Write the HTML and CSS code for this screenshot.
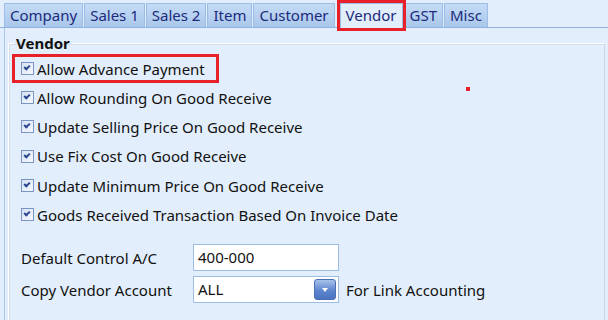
FILE: index.html
```html
<!DOCTYPE html>
<html lang="en">

<head>
    <meta charset="UTF-8">
    <meta name="viewport" content="width=device-width, initial-scale=1.0">
    <title>Vendor Settings</title>
    <link rel="stylesheet" href="styles.css">
</head>

<body>
    <div class="tabs">
        <div class="tab">Company</div>
        <div class="tab">Sales 1</div>
        <div class="tab">Sales 2</div>
        <div class="tab">Item</div>
        <div class="tab">Customer</div>
        <div class="tab active">Vendor</div>
        <div class="tab">GST</div>
        <div class="tab">Misc</div>
    </div>

    <div class="panel">
        <fieldset class="group">
            <legend>Vendor</legend>

            <div class="options">
                <label class="option marked"><span class="check"></span>Allow Advance Payment</label>
                <label class="option"><span class="check"></span>Allow Rounding On Good Receive</label>
                <label class="option"><span class="check"></span>Update Selling Price On Good Receive</label>
                <label class="option"><span class="check"></span>Use Fix Cost On Good Receive</label>
                <label class="option"><span class="check"></span>Update Minimum Price On Good Receive</label>
                <label class="option"><span class="check"></span>Goods Received Transaction Based On Invoice Date</label>
            </div>

            <div class="fields">
                <div class="field">
                    <span class="field-label">Default Control A/C</span>
                    <div class="input">400-000</div>
                </div>
                <div class="field">
                    <span class="field-label">Copy Vendor Account</span>
                    <div class="input select">ALL<span class="drop"></span></div>
                    <span class="note">For Link Accounting</span>
                </div>
            </div>

            <!-- stray red pixel from the original capture -->
            <span class="dot"></span>
        </fieldset>
    </div>
</body>

</html>
```

FILE: styles.css
```css
/* Global styles */

body {
    margin: 0;
    font-family: "Noto Sans", sans-serif;
    font-size: 15px;
    color: #111;
    background-color: #e2eefb;
    /* Light blue window */
    height: 320px;
    overflow: hidden;
}
/* Tab strip */

.tabs {
    display: flex;
    gap: 1px;
    padding: 3px 0 0 4px;
    height: 24px;
    border-bottom: 1px solid #8fb3e0;
}

.tab {
    height: 23px;
    line-height: 22px;
    padding: 0 5px;
    color: #1c2a7c;
    border: 1px solid #9cbde6;
    border-bottom: none;
    background: linear-gradient(#c4dbf5, #a9c7eb);
}

.tab.active {
    height: 24px;
    margin: 0 0 0 4px;
    background: #e2eefb;
    outline: 3px solid #e8202a;
    outline-offset: 0;
    position: relative;
    /* highlight box over the strip */
}
/* Tab page */

.panel {
    margin-left: 4px;
    height: 292px;
    border-left: 1px solid #a9c5e8;
    padding: 6px 3px 0 3px;
}

.group {
    margin: 0;
    height: 290px;
    padding: 0 0 0 12px;
    border: 1px solid #fff;
    border-right-color: #cfd9e6;
    border-bottom-color: #cfd9e6;
    box-shadow: inset 1px 1px 0 #d4dde8;
    position: relative;
}

.group legend {
    font-weight: bold;
    padding: 0 2px;
    margin-left: -7px;
    line-height: 18px;
}
/* Check options */

.options {
    display: flex;
    flex-direction: column;
    padding-top: 2px;
}

.option {
    display: flex;
    align-items: center;
    gap: 3px;
    height: 29.3px;
    width: max-content;
}

.option.marked {
    outline: 3px solid #e8202a;
    outline-offset: 0;
    padding-right: 11px;
    margin-left: -6px;
    padding-left: 6px;
    height: 23px;
    margin-top: 3px;
    margin-bottom: 3px;
}

.check {
    width: 11px;
    height: 11px;
    border: 1px solid #7b96c2;
    background: linear-gradient(135deg, #d5e2f3, #f6f9fd);
    position: relative;
}

.check::after {
    content: "";
    position: absolute;
    left: 2px;
    top: 2px;
    width: 4px;
    height: 2px;
    border-left: 2px solid #2a4590;
    border-bottom: 2px solid #2a4590;
    transform: rotate(-45deg);
}
/* Fields */

.fields {
    display: flex;
    flex-direction: column;
    gap: 5px;
    margin-top: 15px;
}

.field {
    display: flex;
    align-items: center;
}

.field-label {
    width: 172px;
}

.input {
    width: 140px;
    height: 25px;
    line-height: 25px;
    padding-left: 4px;
    border: 1px solid #9dbde6;
    background: #fff;
    position: relative;
}

.drop {
    position: absolute;
    right: 2px;
    top: 2px;
    width: 22px;
    height: 21px;
    box-sizing: border-box;
    border: 1px solid #4a6fb3;
    border-radius: 3px;
    background: linear-gradient(#a7c2ea, #5e86cf 55%, #4a74c2);
}

.drop::after {
    content: "";
    position: absolute;
    left: 7px;
    top: 8px;
    border-left: 3px solid transparent;
    border-right: 3px solid transparent;
    border-top: 4px solid #fff;
}

.note {
    margin-left: 7px;
}

.dot {
    position: absolute;
    left: 457px;
    top: 35px;
    width: 4px;
    height: 4px;
    background: #e8202a;
}
```
